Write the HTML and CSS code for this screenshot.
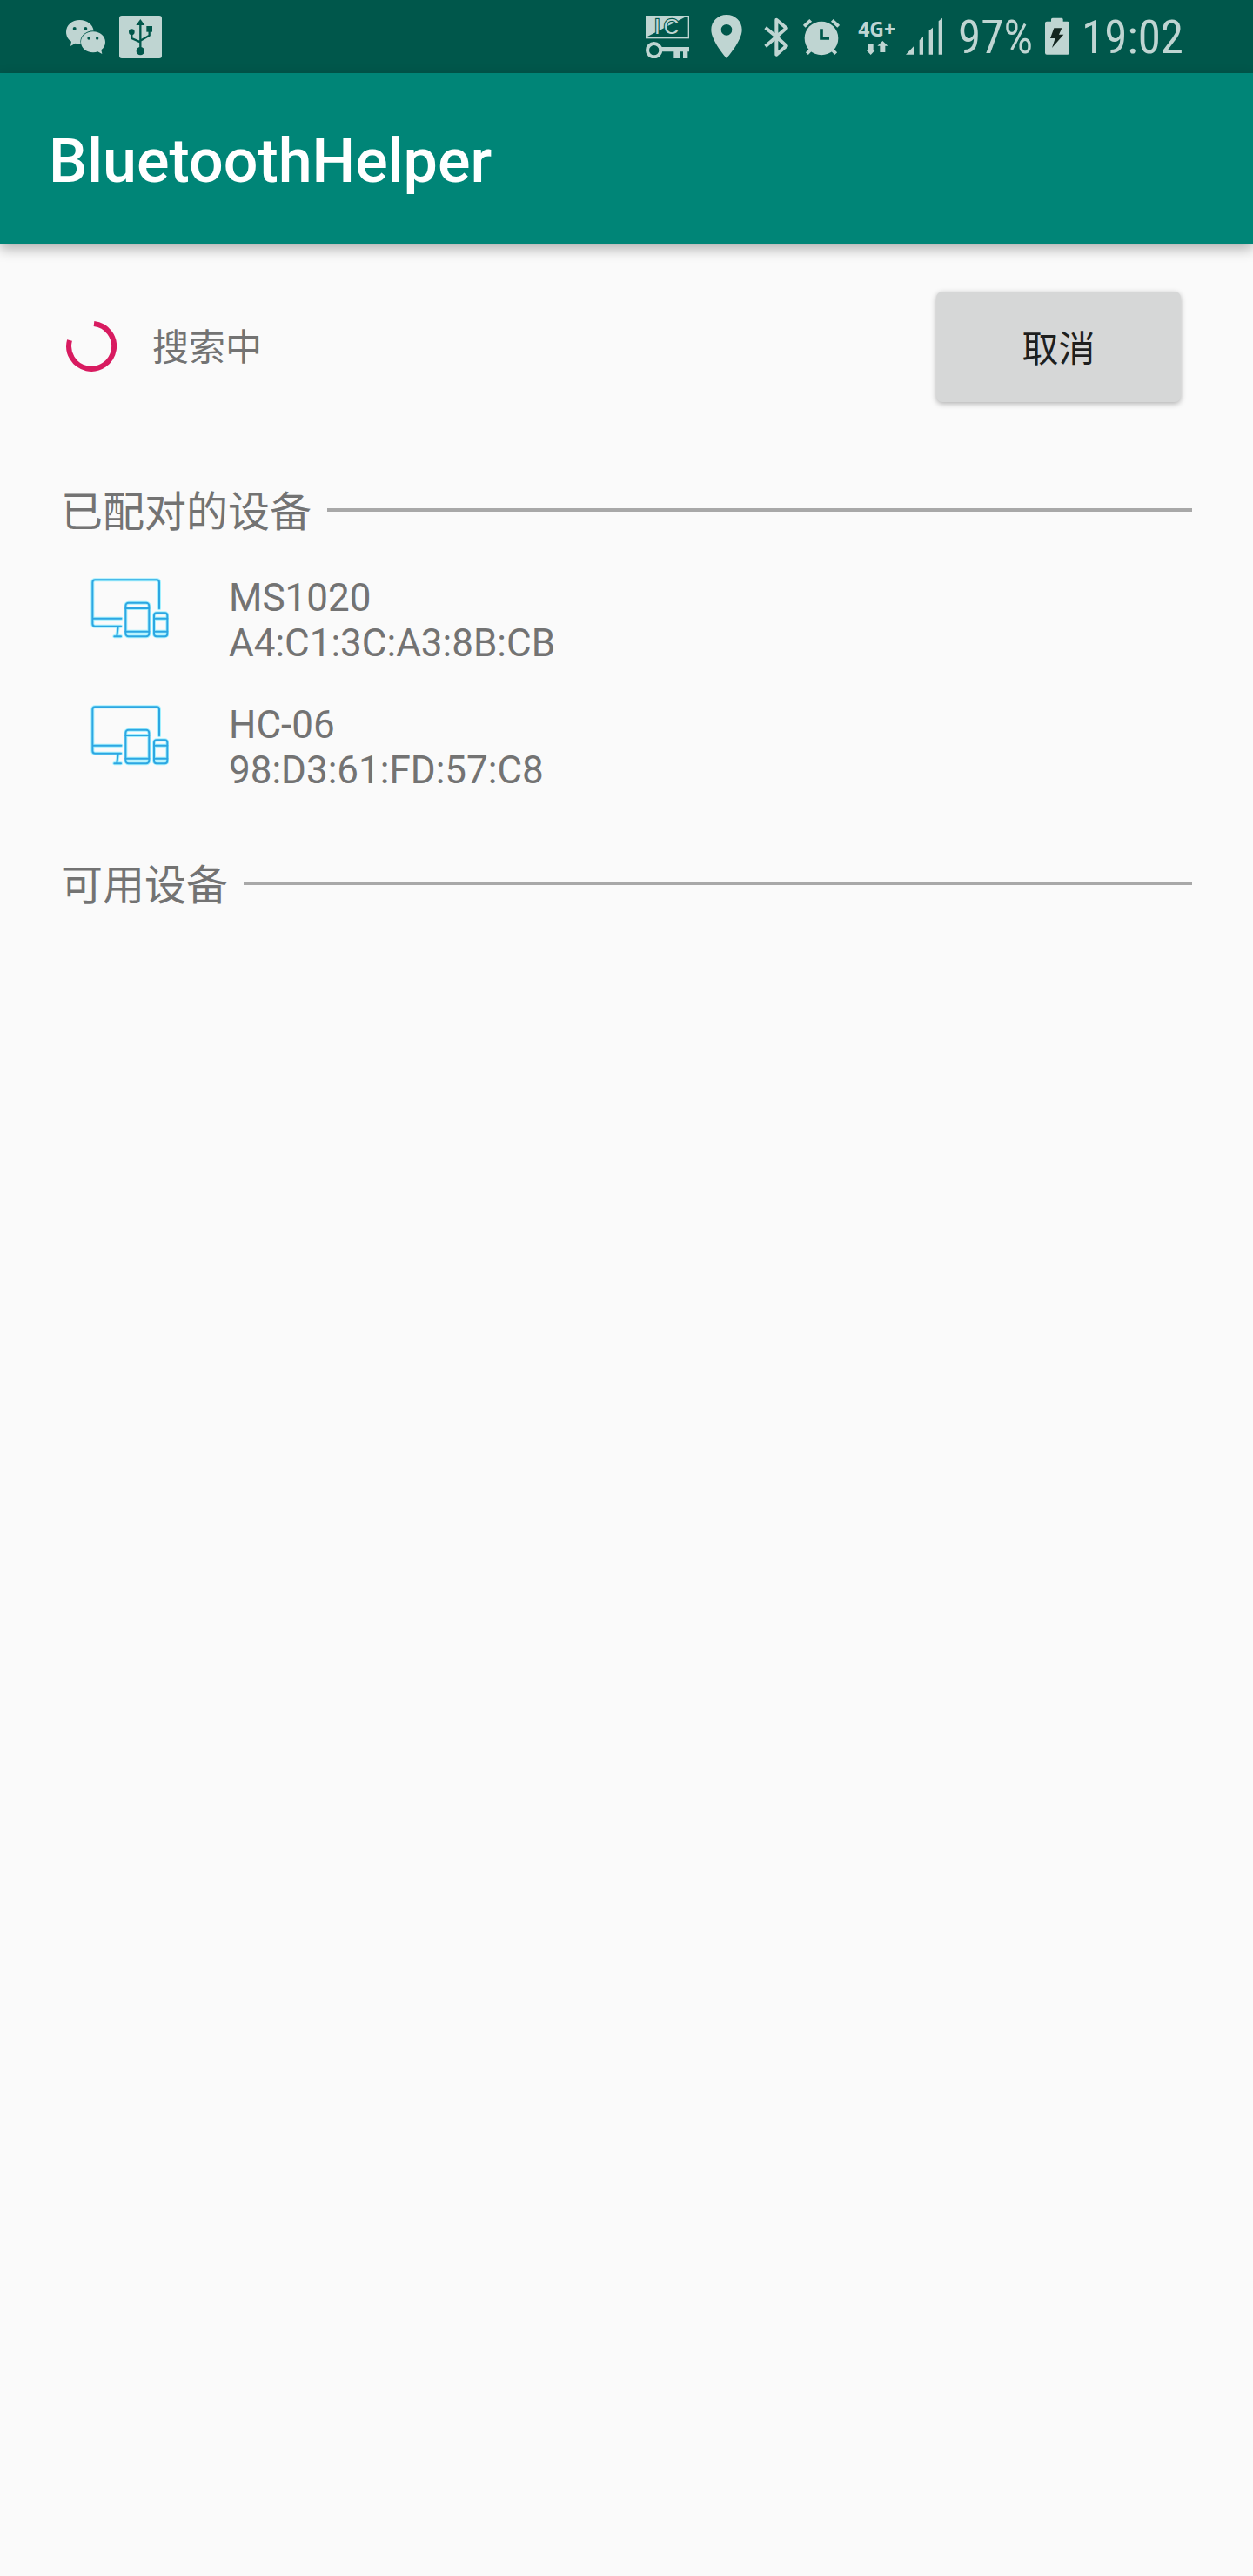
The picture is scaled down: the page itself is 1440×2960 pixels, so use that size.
FILE: index.html
```html
<!DOCTYPE html>
<html lang="zh-CN">
<head>
<meta charset="utf-8">
<meta name="viewport" content="width=device-width, initial-scale=1">
<title>BluetoothHelper</title>
<link rel="stylesheet" href="styles.css">
</head>
<body>
<svg class="defs" aria-hidden="true">
  <symbol id="devices" viewBox="42 42 270 210">
    <g fill="none" stroke-linecap="round" stroke-linejoin="round">
      <path d="M279 148V58Q279 49 270 49H58Q49 49 49 58V200Q49 209 58 209H147M49 182H148M137 210L133 243M124 244H147"/>
      <rect x="163" y="128" width="81" height="116" rx="10"/>
      <path d="M163 147H244M163 227H244"/>
      <rect x="261" y="163" width="46" height="81" rx="9"/>
      <path d="M261 182H307M261 227H307"/>
    </g>
  </symbol>
</svg>

<div class="status-bar">
  <div class="notifications">
    <svg width="46" height="50" viewBox="48 51 138 150" role="img" aria-label="WeChat">
      <path class="ink" d="M95 69C68 69 48 87 48 110C48 124 55 136 66 143L63 159L80 149Q88 152 98 151C93 127 113 106 143 106C140 84 120 69 95 69Z"/>
      <path class="ink" d="M141 109C117 109 99 125 99 145C99 165 117 181 141 181Q150 181 157 178L172 186L169 172C178 165 183 156 183 145C183 125 165 109 141 109Z"/>
      <g class="hole"><circle cx="77" cy="99" r="6"/><circle cx="115" cy="99" r="6"/><circle cx="126" cy="132" r="5"/><circle cx="155" cy="132" r="5"/></g>
    </svg>
    <svg width="49" height="50" viewBox="231 51 147 150" role="img" aria-label="USB">
      <rect class="ink" x="231" y="54" width="147" height="147" rx="9"/>
      <g class="hole"><path d="M304 66L319 87H289Z"/><circle cx="304" cy="176" r="14"/><circle cx="274" cy="110" r="10"/><rect x="325" y="90" width="20" height="20"/></g>
      <path class="hole-line" stroke-width="7" d="M304 84V170M274 112V132L304 145M335 106V122L304 140"/>
    </svg>
  </div>
  <div class="system">
    <svg class="gap-wide" width="50" height="50" viewBox="36 51 150 150" role="img" aria-label="IC">
      <rect x="38" y="56" width="146" height="75" fill="none" stroke="#bfd5d2" stroke-width="4"/>
      <path class="ink" d="M36 54H182L42 126H36Z"/>
      <g class="ic-edge"><text x="66" y="117">I</text><text x="98" y="117">C</text></g>
      <g class="ic"><text x="66" y="117">I</text><text x="98" y="117">C</text></g>
      <circle cx="65" cy="173" r="23" fill="none" stroke="#bfd5d2" stroke-width="12"/>
      <path class="ink" d="M90 162H186V178H181V201H165V178H153V201H133V178H90Z"/>
    </svg>
    <svg class="gap-wide" width="36" height="50" viewBox="258 51 108 150" role="img" aria-label="定位">
      <path class="ink" fill-rule="evenodd" d="M312 51C282 51 259 74 259 103C259 142 312 201 312 201S365 142 365 103C365 74 342 51 312 51ZM312 84A19 19 0 1 1 312 122A19 19 0 1 1 312 84Z"/>
    </svg>
    <svg class="gap-mid" width="28" height="50" viewBox="447 51 84 150" role="img" aria-label="蓝牙">
      <path class="ink-line" stroke-width="12" stroke-linejoin="round" d="M452 95L490 127L452 160M490 127V68L524 97L490 127L524 158L490 188V127"/>
    </svg>
    <svg class="gap-mid" width="42" height="50" viewBox="582 51 126 150" role="img" aria-label="闹钟">
      <circle class="ink" cx="645" cy="132" r="58"/>
      <path class="ink-line" stroke-width="12" d="M586 91L608 70M682 70L704 91M610 169L595 185M680 169L695 185"/>
      <path class="hole-line" stroke-width="11" d="M645 100V132H672"/>
    </svg>
    <div class="network">
      <span>4G+</span>
      <svg width="26" height="16" viewBox="78 141 78 48" aria-hidden="true"><path class="ink" d="M87 150H104V171H112L95 189L78 171H87ZM127 180V158H118L136 141L154 158H145V180Z"/></svg>
    </div>
    <svg class="gap-mid" width="43" height="50" viewBox="216 51 129 150" role="img" aria-label="信号">
      <path class="ink" d="M216 188L243 160V188ZM263 188V139L276 127V188ZM296 188V106L309 95V188ZM329 188V73L342 62V188Z"/>
    </svg>
    <span class="readout battery-level">97%</span>
    <svg class="gap-battery" width="28" height="50" viewBox="693 51 84 150" role="img" aria-label="充电中">
      <path class="ink" d="M714 74V67Q714 62 719 62H750Q755 62 755 67V74H771Q777 74 777 80V182Q777 188 771 188H699Q693 188 693 182V80Q693 74 699 74Z"/>
      <path fill="#12251f" d="M724 97H751L741 119H757L717 165L728 132H711Z"/>
    </svg>
    <time class="readout">19:02</time>
  </div>
</div>

<header class="app-bar"><h1>BluetoothHelper</h1></header>

<main>
  <div class="search">
    <svg class="spinner" width="58" height="58" viewBox="0 0 58 58" aria-hidden="true"><path d="M32 3A26 26 0 1 1 4 22"/></svg>
    <span class="search-label" role="status">搜索中</span>
    <button type="button">取消</button>
  </div>

  <section class="paired">
    <h2>已配对的设备</h2>
    <ul>
      <li>
        <svg class="device-icon" width="90" height="70" aria-hidden="true"><use class="glow" href="#devices"/><use class="core" href="#devices"/></svg>
        <div><p>MS1020</p><p>A4:C1:3C:A3:8B:CB</p></div>
      </li>
      <li>
        <svg class="device-icon" width="90" height="70" aria-hidden="true"><use class="glow" href="#devices"/><use class="core" href="#devices"/></svg>
        <div><p>HC-06</p><p>98:D3:61:FD:57:C8</p></div>
      </li>
    </ul>
  </section>

  <section class="available">
    <h2>可用设备</h2>
  </section>
</main>
</body>
</html>
```
FILE: styles.css
```css
* { box-sizing: border-box; }

body {
  margin: 0;
  min-height: 100vh;
  background: #fafafa;
  color: #737373;
  font-family: Roboto, "Noto Sans CJK SC", sans-serif;
}

h1, h2, p, ul { margin: 0; padding: 0; font-weight: 400; }
ul { list-style: none; }
svg { flex: none; display: block; }
.defs { position: absolute; width: 0; height: 0; }

.status-bar {
  display: flex;
  justify-content: space-between;
  align-items: center;
  height: 84px;
  padding: 0 80px 0 76px;
  background: #00574b;
  color: #bfd5d2;
}
.notifications { display: flex; gap: 15px; }
.system { display: flex; align-items: center; }
.gap-wide { margin-right: 25px; }
.gap-mid { margin-right: 17px; }
.gap-battery { margin-right: 14px; }

.ink { fill: #bfd5d2; }
.ink-line { fill: none; stroke: #bfd5d2; }
.hole { fill: #00574b; }
.hole-line { fill: none; stroke: #00574b; }
.ic, .ic-edge { font: 72px "Liberation Sans", sans-serif; }
.ic-edge { fill: none; stroke: #00574b; stroke-width: 7px; }
.ic { fill: #bfd5d2; }

.network {
  display: flex;
  flex-direction: column;
  align-items: center;
  gap: 2px;
  margin: 0 12px 0 4px;
  font: 700 23px/24px "Open Sans", sans-serif;
}
.readout {
  padding-top: 2px;
  font-family: "Roboto Condensed", "Liberation Sans Narrow", Roboto, sans-serif;
  font-size: 53px;
  line-height: 60px;
}
.battery-level { margin-right: 14px; }

.app-bar {
  display: flex;
  align-items: center;
  height: 196px;
  padding: 6px 56px 0;
  background: #008577;
  color: #fff;
  box-shadow: 0 6px 14px rgba(0, 0, 0, .3);
}
.app-bar h1 { font-size: 70px; line-height: 82px; font-weight: 500; }

main { padding: 54px 70px 0; }

.search {
  display: flex;
  align-items: center;
  height: 128px;
  padding: 0 13px 0 6px;
}
.spinner path { fill: none; stroke: #d81b60; stroke-width: 6px; }
.search-label {
  flex: 1;
  margin-left: 41px;
  padding-top: 4px;
  font-size: 42px;
  line-height: 60px;
}
button {
  width: 281px;
  height: 127px;
  border: 0;
  border-radius: 7px;
  background: #d6d7d7;
  box-shadow: 0 2px 6px rgba(0, 0, 0, .3);
  color: #1e1f1f;
  font: 42px/60px "Noto Sans CJK SC", sans-serif;
}

.paired { padding-top: 92px; }
.available { padding-top: 72px; }
h2 {
  display: flex;
  align-items: center;
  gap: 18px;
  font-size: 48px;
  line-height: 70px;
}
h2::after {
  content: "";
  flex: 1;
  height: 4px;
  margin-bottom: 6px;
  background: #a8a8a8;
}
.paired ul { display: flex; flex-direction: column; gap: 42px; padding-top: 37px; }
li { display: flex; gap: 69px; padding-left: 34px; }
li p { font-size: 44px; line-height: 52px; }
.device-icon { margin-top: 3px; }
.glow { stroke: #8eeeff; stroke-width: 12px; opacity: .8; }
.core { stroke: #2da6e2; stroke-width: 6px; }
```
